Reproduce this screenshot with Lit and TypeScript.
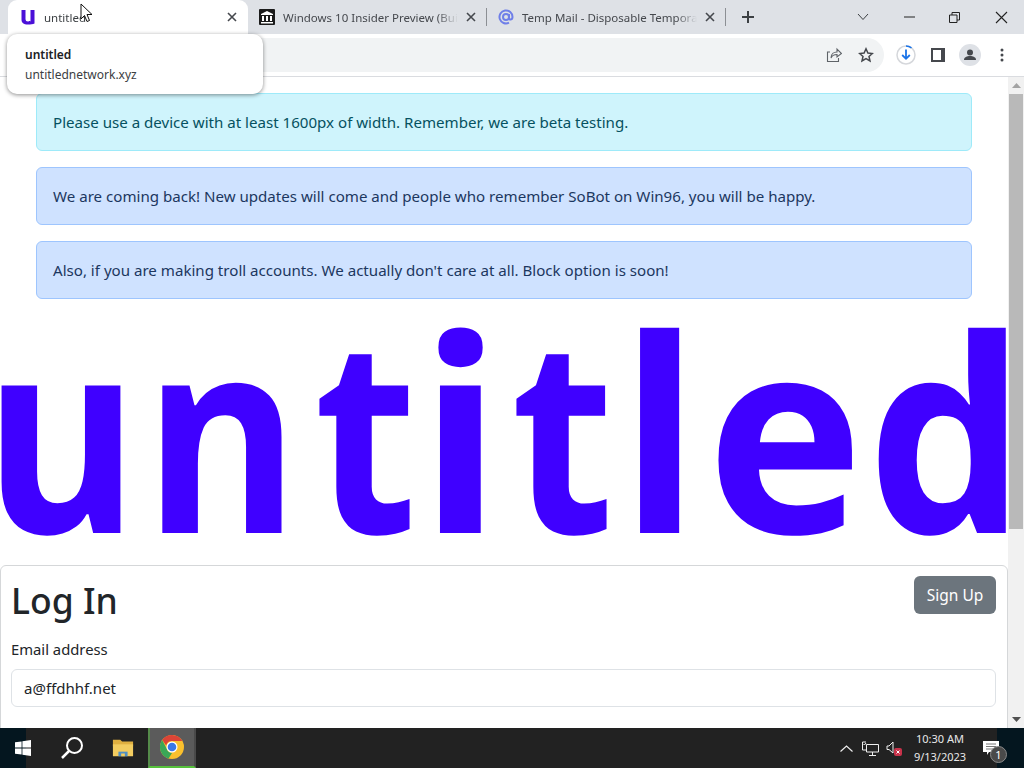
import { LitElement, html, css, svg } from "lit";
import { customElement } from "lit/decorators.js";

const closeX = svg`<svg class="x" width="10" height="10" viewBox="0 0 10 10"><path d="M1 1l8 8M9 1l-8 8" stroke="#45484d" stroke-width="1.6" fill="none"/></svg>`;

/* Wordmark letters: where each one starts on the line and how much it is narrowed. */
const LOGO = [
  { ch: "u", start: -15, sx: 0.87 },
  { ch: "n", start: 145, sx: 0.873 },
  { ch: "t", start: 314, sx: 0.88 },
  { ch: "i", start: 420, sx: 1 },
  { ch: "t", start: 511, sx: 0.88 },
  { ch: "l", start: 621, sx: 0.96 },
  { ch: "e", start: 706, sx: 0.98 },
  { ch: "d", start: 867, sx: 0.92 },
];

@customElement("app-root")
export class AppRoot extends LitElement {
  static styles = css`
    :host { display: block; width: 1024px; height: 768px; overflow: hidden; position: relative; background: #fff; font-family: "Noto Sans", "Open Sans", sans-serif; color: #212529; }
    * { box-sizing: border-box; }
    .win { display: flex; flex-direction: column; height: 768px; }

    .strip { height: 34px; flex: none; background: #dee1e6; display: flex; padding-left: 8px; align-items: stretch; }
    .tab { width: 239px; display: flex; align-items: center; padding: 0 10px 0 11px; font-size: 11.5px; color: #45484d; position: relative; }
    .tab.active { width: 240px; background: #fff; border-radius: 9px 9px 0 0; color: #3c4043; padding-left: 12px; padding-right: 10px; }
    .fav { width: 16px; height: 16px; flex: none; margin-right: 8px; }
    .title { flex: 1; white-space: nowrap; overflow: hidden; -webkit-mask-image: linear-gradient(90deg, #000 88%, transparent 100%); mask-image: linear-gradient(90deg, #000 88%, transparent 100%); }
    .x { flex: none; margin: 0 1px 0 8px; }
    .divider { position: absolute; right: 0; top: 8px; height: 18px; width: 1px; background: #8c8f94; }
    .plus { margin-left: 15px; align-self: center; }
    .caption { margin-left: auto; display: flex; align-items: center; height: 34px; padding-right: 16px; }
    .caption svg { display: block; }
    .cap-chev { margin-right: 35px; }
    .cap-min { margin-right: 34px; }
    .cap-max { margin-right: 35px; }

    .toolbar { height: 43px; flex: none; background: #fff; border-bottom: 1px solid #dadce0; display: flex; align-items: flex-start; padding-top: 4px; padding-left: 200px; }
    .omni { width: 684px; height: 34px; background: #f1f3f4; border-radius: 0 17px 17px 0; display: flex; align-items: center; justify-content: flex-end; padding-right: 10px; gap: 16px; }
    .tools { display: flex; align-items: center; height: 34px; flex: 1; padding-left: 12px; }
    .tools svg { display: block; }
    .t-dl { margin-right: 15px; }
    .t-side { margin-right: 14px; }
    .t-prof { margin-right: 19px; }

    .view { flex: 1; display: flex; min-height: 0; overflow: hidden; }
    .page { flex: 1; overflow: hidden; min-width: 0; }
    .alerts { padding: 16px 36px 0; display: flex; flex-direction: column; gap: 16px; }
    .alert { height: 58px; border: 1px solid; border-radius: 6px; padding: 0 16px; display: flex; align-items: center; font-size: 15.1px; white-space: nowrap; }
    .info { background: #cff4fc; border-color: #9eeaf9; color: #055160; }
    .primary { background: #cfe2ff; border-color: #9ec5fe; color: #1c3760; }
    .logo { height: 266px; overflow: hidden; white-space: nowrap; font-weight: 700; font-size: 270px; line-height: 258px; color: #3f00ff; display: flex; align-items: flex-start; }
    .logo span { display: block; flex: none; transform-origin: 0 50%; }
    .card { border: 1px solid #d5d7d9; border-radius: 6px; padding: 10px 11px 0 10px; height: 200px; }
    .head { display: flex; justify-content: space-between; align-items: flex-start; }
    h1 { margin: 0; font-size: 35.5px; font-weight: 500; line-height: 48px; }
    .btn { width: 82px; height: 38px; background: #6c757d; color: #fff; border-radius: 6px; font-size: 15.5px; display: flex; align-items: center; justify-content: center; }
    label { display: block; font-size: 14.8px; line-height: 24px; margin-top: 13px; }
    .input { height: 38px; margin-top: 8px; border: 1px solid #dee2e6; border-radius: 6px; padding: 0 12px; font-size: 15px; display: flex; align-items: center; color: #212529; }

    .sb { width: 16px; flex: none; background: #f1f1f1; display: flex; flex-direction: column; align-items: center; }
    .sb-btn { height: 17px; flex: none; display: flex; align-items: center; justify-content: center; }
    .thumb { width: 14px; height: 435px; background: #b9b9b9; flex: none; }
    .sb-gap { flex: 1; }

    .taskbar { height: 40px; flex: none; background: #222; display: flex; align-items: stretch; color: #fff; }
    .tb { display: flex; align-items: center; justify-content: center; flex: none; }
    .tb-start { width: 46px; background: linear-gradient(90deg, #04161f 26px, #222 26px); }
    .tb-search { width: 52px; }
    .tb-folder { width: 50px; }
    .tb-chrome { width: 48px; background: #5b5b5b; border-bottom: 2px solid #56c13c; border-left: 2px solid #558b4a; border-right: 2px solid #4a4a4a; }
    .tray { margin-left: auto; display: flex; align-items: center; }
    .tray svg { display: block; }
    .clock { width: 76px; margin-right: 4px; font-size: 11px; line-height: 18px; text-align: center; color: #e9e9e9; }
    .note { width: 42px; position: relative; height: 40px; display: flex; align-items: center; padding-left: 1px; background: linear-gradient(90deg, #222 15px, #04161f 15px); }
    .t-caret { margin-right: 9px; }
    .t-net { margin-right: 7px; }
    .badge { position: absolute; left: 8px; top: 18px; width: 17px; height: 17px; border-radius: 50%; background: #4a4a4a; border: 1px solid #8a8a8a; color: #fff; font-size: 11px; display: flex; align-items: center; justify-content: center; }

    .tip { position: absolute; left: 7px; top: 34px; width: 256px; height: 60px; background: #fff; border-radius: 10px; box-shadow: 0 1px 4px rgba(0,0,0,.45); padding: 11px 18px; font-size: 12px; line-height: 20px; color: #3c4043; }
    .tip b { display: block; font-weight: 600; color: #202124; }
    .cursor { position: absolute; left: 80px; top: 3px; }
  `;

  private logo() {
    return LOGO.map((l, i) => {
      const next = LOGO[i + 1];
      const w = next ? next.start - l.start : 160;
      const ml = i === 0 ? `margin-left:${l.start}px;` : "";
      return html`<span style="${ml}width:${w}px;transform:scaleX(${l.sx})">${l.ch}</span>`;
    });
  }

  render() {
    return html`
      <div class="win">
        <div class="strip">
          <div class="tab active">
            <svg class="fav" viewBox="0 0 16 16"><path d="M1.500 1h4v9c0 1.700 1 2.500 2.500 2.500s2.500-.2 2.500-.4V1h4v13.600c-1.500.6-4 1-6.500 1C3.500 15.600 1.500 13.800 1.500 10.500z" fill="#4b10d8"/></svg>
            <span class="title">untitled</span>
            ${closeX}
          </div>
          <div class="tab">
            <svg class="fav" viewBox="0 0 16 16"><rect width="16" height="16" rx="1" fill="#1b1b1b"/><path d="M2 5l6-3 6 3v1H2zM3 7h2v5H3zM7 7h2v5H7zM11 7h2v5h-2zM2 13h12v1.500H2z" fill="#fff"/></svg>
            <span class="title">Windows 10 Insider Preview (Build 23</span>
            ${closeX}
            <span class="divider"></span>
          </div>
          <div class="tab">
            <svg class="fav" viewBox="0 0 16 16"><circle cx="8" cy="8" r="3" fill="none" stroke="#6f7fe8" stroke-width="2"/><path d="M11 5v4c0 2.500 3.500 2 3.500-1A6.500 6.500 0 1 0 11 13.700" fill="none" stroke="#6f7fe8" stroke-width="2"/></svg>
            <span class="title">Temp Mail - Disposable Temporary Email</span>
            ${closeX}
            <span class="divider"></span>
          </div>
          <svg class="plus" width="14" height="14" viewBox="0 0 14 14"><path d="M7 1v12M1 7h12" stroke="#3c4043" stroke-width="2"/></svg>
          <div class="caption">
            <svg class="cap-chev" width="12" height="8" viewBox="0 0 12 8"><path d="M1 1l5 5.500L11 1" stroke="#3c4043" fill="none"/></svg>
            <svg class="cap-min" width="11" height="2" viewBox="0 0 11 2"><path d="M0 1h11" stroke="#222" stroke-width="1"/></svg>
            <svg class="cap-max" width="11" height="11" viewBox="0 0 11 11"><path d="M.5 3h7.500v7.500H.5zM3 3V.5h7.500V8H8" stroke="#222" fill="none"/></svg>
            <svg width="13" height="13" viewBox="0 0 13 13"><path d="M1 1l11 11M12 1L1 12" stroke="#222" stroke-width="1.100" fill="none"/></svg>
          </div>
        </div>
        <div class="toolbar">
          <div class="omni">
            <svg width="16" height="16" viewBox="0 0 16 16"><path d="M4 5H1.500v9.500h11V11M5 11c0-4 3-6 6-6V2l4.500 4.500L11 10V7.500c-3 0-5 1-6 3.500z" stroke="#5f6368" stroke-width="1.100" fill="none"/></svg>
            <svg width="16" height="16" viewBox="0 0 16 16"><path d="M8 1.800l1.900 4.200 4.500.5-3.400 3 1 4.500L8 11.700 4 14l1-4.500-3.400-3 4.500-.5z" stroke="#45484d" stroke-width="1.500" fill="none"/></svg>
          </div>
          <div class="tools">
            <svg class="t-dl" width="20" height="20" viewBox="0 0 20 20"><circle cx="10" cy="10" r="9" fill="#fff" stroke="#d5d7db" stroke-width="1.500"/><path d="M10 1a9 9 0 0 1 5.500 1.900" stroke="#1a73e8" stroke-width="1.500" fill="none"/><path d="M10 4.500v9M6.200 10l3.800 3.800 3.800-3.800" stroke="#1a73e8" stroke-width="1.800" fill="none"/></svg>
            <svg class="t-side" width="14" height="14" viewBox="0 0 14 14"><rect width="14" height="14" fill="#45484d"/><rect x="2" y="2" width="8" height="10" fill="#fff"/></svg>
            <svg class="t-prof" width="22" height="22" viewBox="0 0 22 22"><circle cx="11" cy="11" r="11" fill="#dee1e6"/><circle cx="11" cy="8.500" r="3" fill="#45484d"/><path d="M5 16c0-3 3-4 6-4s6 1 6 4z" fill="#45484d"/></svg>
            <svg width="4" height="14" viewBox="0 0 4 14"><circle cx="2" cy="2" r="1.500" fill="#45484d"/><circle cx="2" cy="7" r="1.500" fill="#45484d"/><circle cx="2" cy="12" r="1.500" fill="#45484d"/></svg>
          </div>
        </div>
        <div class="view">
          <div class="page">
            <div class="alerts">
              <div class="alert info">Please use a device with at least 1600px of width. Remember, we are beta testing.</div>
              <div class="alert primary">We are coming back! New updates will come and people who remember SoBot on Win96, you will be happy.</div>
              <div class="alert primary">Also, if you are making troll accounts. We actually don't care at all. Block option is soon!</div>
            </div>
            <div class="logo">${this.logo()}</div>
            <div class="card">
              <div class="head">
                <h1>Log In</h1>
                <div class="btn">Sign Up</div>
              </div>
              <label>Email address</label>
              <div class="input">a@ffdhhf.net</div>
            </div>
          </div>
          <div class="sb">
            <div class="sb-btn"><svg width="9" height="5" viewBox="0 0 9 5"><path d="M4.500 0L9 5H0z" fill="#a3a3a3"/></svg></div>
            <div class="thumb"></div>
            <div class="sb-gap"></div>
            <div class="sb-btn"><svg width="9" height="5" viewBox="0 0 9 5"><path d="M0 0h9L4.500 5z" fill="#505050"/></svg></div>
          </div>
        </div>
        <div class="taskbar">
          <div class="tb tb-start">
            <svg width="16" height="16" viewBox="0 0 16 16"><path d="M0 2.300l6.600-.9v6.200H0zM7.400 1.300L16 0v7.600H7.400zM0 8.400h6.600v6.200L0 13.700zM7.400 8.400H16V16l-8.600-1.300z" fill="#fff"/></svg>
          </div>
          <div class="tb tb-search">
            <svg width="24" height="24" viewBox="0 0 24 24"><circle cx="14.500" cy="9.500" r="7.500" fill="none" stroke="#fff" stroke-width="2"/><path d="M9 15l-7 7" stroke="#fff" stroke-width="2.500"/></svg>
          </div>
          <div class="tb tb-folder">
            <svg width="22" height="20" viewBox="0 0 24 20"><path d="M1 1h8l2 2h12v5H1z" fill="#e0b040"/><path d="M1 6h22v13H1z" fill="#f3cd60"/><path d="M7 14h10v5H7z" fill="#4f8fc4"/><path d="M10 16h4v3h-4z" fill="#f3cd60"/></svg>
          </div>
          <div class="tb tb-chrome">
            <svg width="24" height="24" viewBox="0 0 24 24"><circle cx="12" cy="12" r="12" fill="#fbc02d"/><path d="M12 0a12 12 0 0 1 10.400 6H12a6 6 0 0 0-5.800 4.400L2.200 5A12 12 0 0 1 12 0z" fill="#db4437"/><path d="M2.200 5l4.600 9A6 6 0 0 0 12 18l-3.400 5.500A12 12 0 0 1 2.200 5z" fill="#3aa757"/><circle cx="12" cy="12" r="5.500" fill="#fff"/><circle cx="12" cy="12" r="4.300" fill="#3b78e7"/></svg>
          </div>
          <div class="tray">
            <svg class="t-caret" width="13" height="7" viewBox="0 0 13 7"><path d="M.5 6.500l6-5.500 6 5.500" stroke="#eee" fill="none" stroke-width="1.200"/></svg>
            <svg class="t-net" width="17" height="15" viewBox="0 0 17 15"><path d="M4 1H.5v8h4M4.500 3.500h12V11h-12zM10.500 11v3M7 14.500h7" stroke="#eee" fill="none"/><path d="M1.500 3l1 1 1.500-2" stroke="#eee" fill="none"/></svg>
            <svg width="16" height="17" viewBox="0 0 16 17"><path d="M1 6h2l4-4v11L3 9.500H1z" stroke="#eee" fill="none"/><rect x="8" y="8" width="8" height="8" rx="2" fill="#c8324a"/><path d="M10.500 10.500l3 3M13.500 10.500l-3 3" stroke="#fff"/></svg>
            <div class="clock">10:30 AM<br />9/13/2023</div>
            <div class="note">
              <svg width="16" height="14" viewBox="0 0 16 14"><path d="M0 0h16v11H6l-2 3v-3H0z" fill="#fff"/><path d="M3 3h10M3 5.500h10M3 8h10" stroke="#777"/></svg>
              <span class="badge">1</span>
            </div>
          </div>
        </div>
      </div>
      <div class="tip"><b>untitled</b>untitlednetwork.xyz</div>
      <svg class="cursor" width="13" height="20" viewBox="0 0 13 20"><path d="M1 1v15l3.500-3.500 2.500 6 2.500-1-2.500-6H12z" fill="#fff" stroke="#111"/></svg>
    `;
  }
}
